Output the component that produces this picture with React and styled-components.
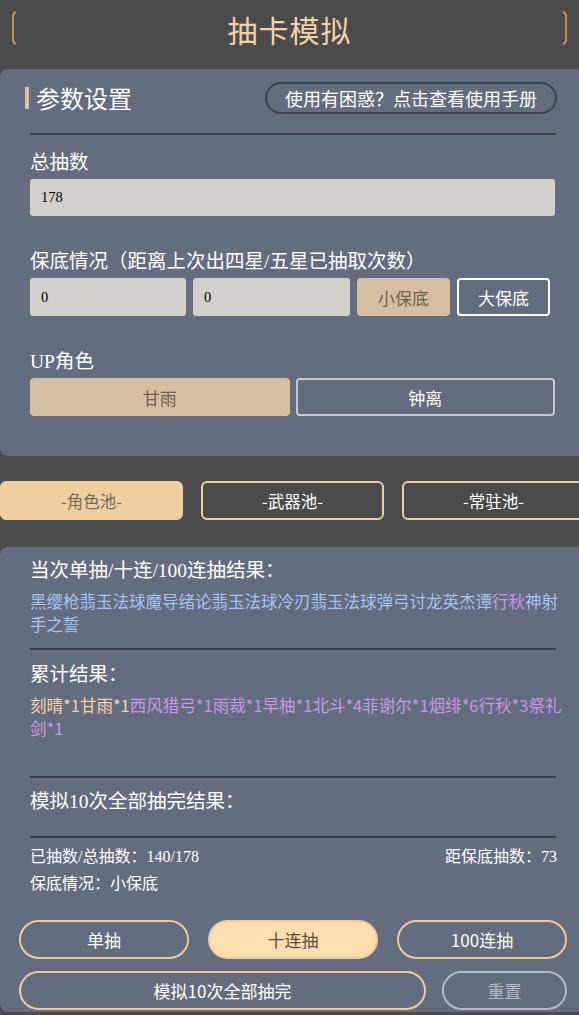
import { useState } from "react";
import styled, { createGlobalStyle } from "styled-components";

const GlobalStyle = createGlobalStyle`
  html, body {
    margin: 0;
    padding: 0;
    background: #4b4b4b;
    overflow-x: hidden;
  }
  body {
    font-family: "Liberation Serif", "Noto Sans CJK SC", serif;
    color: #fff;
  }
`;

const Page = styled.div`
  width: 591px;
`;

const Header = styled.div`
  width: 579px;
  height: 60px;
  display: flex;
  align-items: center;
  justify-content: space-between;
  padding: 0 10px;
  box-sizing: border-box;
`;

const HeaderTitle = styled.div`
  font-family: "Noto Sans CJK SC", sans-serif;
  font-size: 30px;
  color: #f2d2a6;
  letter-spacing: 1px;
  margin-top: -3px;
`;

const Bracket = ({ flip }) => (
  <svg width="8" height="34" viewBox="0 0 8 34" style={{ transform: flip ? "scaleX(-1)" : "none", marginTop: -4 }}>
    <path d="M6 1 Q3 2 3 5 L3 29 Q3 32 6 33" fill="none" stroke="#e79a4e" strokeWidth="1.6" />
  </svg>
);

const Panel = styled.div`
  margin-top: ${(p) => p.$top}px;
  background: #646c7f;
  border-radius: 8px 0 0 8px;
  padding: ${(p) => p.$pad};
`;

const TitleRow = styled.div`
  display: flex;
  align-items: center;
  justify-content: space-between;
  width: 527px;
`;

const SectionTitle = styled.div`
  font-family: "Noto Sans CJK SC", sans-serif;
  font-size: 24px;
  line-height: 32px;
  display: flex;
  align-items: center;
  margin-left: -5px;
  &::before {
    content: "";
    width: 4px;
    height: 22px;
    background: #dbc19e;
    margin-right: 7px;
  }
`;

const HelpButton = styled.button`
  height: 32px;
  padding: 0 18px;
  border: 2px solid #3e4250;
  border-radius: 16px;
  background: transparent;
  color: #fff;
  font-family: "Noto Sans CJK SC", sans-serif;
  font-size: 18px;
`;

const Divider = styled.div`
  width: 526px;
  height: 2px;
  background: #3c404b;
  margin: ${(p) => p.$m};
`;

const Label = styled.div`
  font-size: 19.5px;
  line-height: 26px;
  margin-top: ${(p) => p.$top || 0}px;
`;

const Row = styled.div`
  display: flex;
  gap: ${(p) => p.$gap}px;
  margin-top: 3px;
  width: 525px;
`;

const Input = styled.input`
  flex: ${(p) => p.$flex || 1};
  width: ${(p) => (p.$w ? p.$w + "px" : "auto")};
  height: ${(p) => p.$h}px;
  box-sizing: border-box;
  border: none;
  border-radius: 3px;
  background: #d3cfcb;
  padding: 0 11px;
  font-family: "Liberation Serif", serif;
  font-size: 14.5px;
  color: #000;
  outline: none;
`;

const ChoiceButton = styled.button`
  height: 38px;
  width: ${(p) => (p.$w ? p.$w + "px" : "auto")};
  flex: ${(p) => (p.$w ? "none" : 1)};
  box-sizing: border-box;
  border-radius: 4px;
  font-family: "Noto Sans CJK SC", sans-serif;
  font-size: 17px;
  border: 2px solid ${(p) => (p.$active ? "#d6bfa1" : p.$line)};
  background: ${(p) => (p.$active ? "#d6bfa1" : "transparent")};
  color: ${(p) => (p.$active ? "#6f6253" : "#fff")};
`;

const Tabs = styled.div`
  display: flex;
  gap: 18px;
  margin-top: 25px;
`;

const Tab = styled.button`
  width: 183px;
  height: 39px;
  box-sizing: border-box;
  border-radius: 6px;
  font-family: "Noto Sans CJK SC", sans-serif;
  font-size: 16.5px;
  border: 2px solid #efcf9f;
  background: ${(p) => (p.$active ? "#efcf9f" : "transparent")};
  color: ${(p) => (p.$active ? "#7b6a55" : "#fff")};
`;

const ResultText = styled.div`
  font-family: "Noto Sans CJK SC", sans-serif;
  font-size: 16.5px;
  line-height: 23px;
  width: 536px;
  margin-top: 6px;
  min-height: ${(p) => p.$min || 0}px;
  word-break: break-all;
`;

const Item = styled.span`
  color: ${(p) => p.$c};
`;

const Stats = styled.div`
  width: 527px;
  display: grid;
  grid-template-columns: 1fr auto;
  font-size: 16px;
  line-height: 27px;
  margin-top: 5px;
`;

const Actions = styled.div`
  display: flex;
  gap: ${(p) => p.$gap}px;
  width: 548px;
  margin-left: -11px;
  margin-top: ${(p) => p.$top}px;
`;

const ActionButton = styled.button`
  height: 39px;
  flex: ${(p) => (p.$w ? "none" : 1)};
  width: ${(p) => (p.$w ? p.$w + "px" : "auto")};
  box-sizing: border-box;
  border-radius: 20px;
  font-family: "Noto Sans CJK SC", sans-serif;
  font-size: 17px;
  border: 2px solid ${(p) => (p.$muted ? "#b3bac7" : "#f0cb96")};
  background: ${(p) => (p.$active ? "#ffdfb0" : "transparent")};
  color: ${(p) => (p.$active ? "#5c4d3d" : p.$muted ? "#b3bac7" : "#fff")};
`;

const BLUE = "#a3c3f3";
const PURPLE = "#c896e6";
const GOLD = "#f6d3a3";

const current = [
  ["黑缨枪", BLUE], ["翡玉法球", BLUE], ["魔导绪论", BLUE], ["翡玉法球", BLUE],
  ["冷刃", BLUE], ["翡玉法球", BLUE], ["弹弓", BLUE], ["讨龙英杰谭", BLUE],
  ["行秋", PURPLE], ["神射手之誓", BLUE],
];

const total = [
  ["刻晴*1", GOLD], ["甘雨*1", GOLD], ["西风猎弓*1", PURPLE], ["雨裁*1", PURPLE],
  ["早柚*1", PURPLE], ["北斗*4", PURPLE], ["菲谢尔*1", PURPLE], ["烟绯*6", PURPLE],
  ["行秋*3", PURPLE], ["祭礼剑*1", PURPLE],
];

export default function App() {
  const [pool, setPool] = useState(0);
  const [up, setUp] = useState(0);
  const [guarantee, setGuarantee] = useState(0);

  return (
    <Page>
      <GlobalStyle />
      <Header>
        <Bracket />
        <HeaderTitle>抽卡模拟</HeaderTitle>
        <Bracket flip />
      </Header>

      <Panel $top={9} $pad="13px 0 40px 30px">
        <TitleRow>
          <SectionTitle>参数设置</SectionTitle>
          <HelpButton>使用有困惑？点击查看使用手册</HelpButton>
        </TitleRow>
        <Divider $m="19px 0 0" />

        <Label $top={15}>总抽数</Label>
        <Row $gap={0}>
          <Input $h={37} defaultValue="178" />
        </Row>

        <Label $top={33}>保底情况（距离上次出四星/五星已抽取次数）</Label>
        <Row $gap={7}>
          <Input $h={38} $flex="none" $w={156} defaultValue="0" />
          <Input $h={38} $flex="none" $w={157} defaultValue="0" />
          <ChoiceButton $w={93} $line="#fff" $active={guarantee === 0} onClick={() => setGuarantee(0)}>
            小保底
          </ChoiceButton>
          <ChoiceButton $w={93} $line="#fff" $active={guarantee === 1} onClick={() => setGuarantee(1)}>
            大保底
          </ChoiceButton>
        </Row>

        <Label $top={33}>UP角色</Label>
        <Row $gap={6}>
          <ChoiceButton $line="#c9c9cc" $active={up === 0} onClick={() => setUp(0)}>甘雨</ChoiceButton>
          <ChoiceButton $line="#c9c9cc" $active={up === 1} onClick={() => setUp(1)}>钟离</ChoiceButton>
        </Row>
      </Panel>

      <Tabs>
        {["-角色池-", "-武器池-", "-常驻池-"].map((t, i) => (
          <Tab key={t} $active={pool === i} onClick={() => setPool(i)}>{t}</Tab>
        ))}
      </Tabs>

      <Panel $top={27} $pad="11px 0 2px 30px">
        <Label>当次单抽/十连/100连抽结果：</Label>
        <ResultText>
          {current.map(([n, c], i) => <Item key={i} $c={c}>{n}</Item>)}
        </ResultText>
        <Divider $m="12px 0 0" />

        <Label $top={12}>累计结果：</Label>
        <ResultText $min={82}>
          {total.map(([n, c], i) => <Item key={i} $c={c}>{n}</Item>)}
        </ResultText>
        <Divider $m="0" />

        <Label $top={11}>模拟10次全部抽完结果：</Label>
        <Divider $m="21px 0 0" />

        <Stats>
          <span>已抽数/总抽数：140/178</span>
          <span>距保底抽数：73</span>
          <span>保底情况：小保底</span>
        </Stats>

        <Actions $gap={19} $top={23}>
          <ActionButton>单抽</ActionButton>
          <ActionButton $active>十连抽</ActionButton>
          <ActionButton>100连抽</ActionButton>
        </Actions>
        <Actions $gap={16} $top={12}>
          <ActionButton>模拟10次全部抽完</ActionButton>
          <ActionButton $w={125} $muted>重置</ActionButton>
        </Actions>
      </Panel>
    </Page>
  );
}
